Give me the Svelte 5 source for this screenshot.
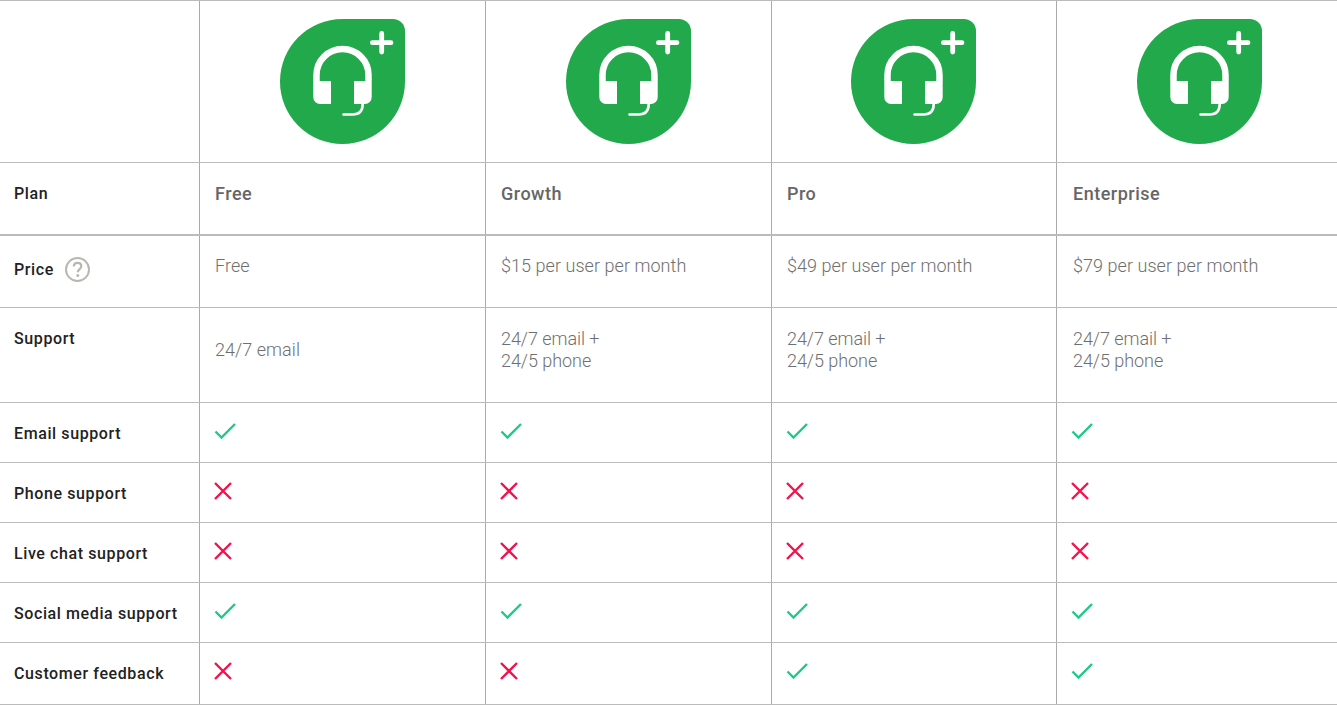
<script>
  const plans = ["Free", "Growth", "Pro", "Enterprise"];
  const prices = ["Free", "$15 per user per month", "$49 per user per month", "$79 per user per month"];
  const support = [["24/7 email"], ["24/7 email +", "24/5 phone"], ["24/7 email +", "24/5 phone"], ["24/7 email +", "24/5 phone"]];
  const features = [
    { name: "Email support", values: [true, true, true, true] },
    { name: "Phone support", values: [false, false, false, false] },
    { name: "Live chat support", values: [false, false, false, false] },
    { name: "Social media support", values: [true, true, true, true] },
    { name: "Customer feedback", values: [false, false, true, true] },
  ];
</script>

<div class="table">
  <div class="row logos">
    <div class="cell label"></div>
    {#each plans as plan}
      <div class="cell logo">
        <svg width="125" height="125" viewBox="0 0 125 125" aria-label={plan}>
          <path d="M62.5 0H113a12 12 0 0 1 12 12V62.5A62.5 62.5 0 1 1 62.5 0z" fill="#22a94b" />
          <path d="M36.5 62V56a26 26 0 0 1 52 0v6" fill="none" stroke="#fff" stroke-width="6.5" />
          <path d="M33.3 62H51V85H40a6.7 6.7 0 0 1-6.7-6.7zM74 62H91.7V78.3A6.7 6.7 0 0 1 85 85H74z" fill="#fff" />
          <path d="M82.7 85c0 7-3.5 10.5-10 10.5H63.5" fill="none" stroke="#fff" stroke-width="2.6" stroke-linecap="round" />
          <path d="M92.4 23.7h18.6M101.7 14.4v18.6" fill="none" stroke="#fff" stroke-width="4.8" stroke-linecap="round" />
        </svg>
      </div>
    {/each}
  </div>

  <div class="row plan">
    <div class="cell label">Plan</div>
    {#each plans as plan}
      <div class="cell name">{plan}</div>
    {/each}
  </div>

  <div class="row price">
    <div class="cell label">
      Price
      <svg class="help" width="25" height="25" viewBox="0 0 25 25">
        <circle cx="12.5" cy="12.5" r="11.5" fill="none" stroke="#b8b8b0" stroke-width="2" />
        <path d="M8.8 9.6c0-2.3 1.6-3.7 3.8-3.7s3.7 1.3 3.7 3.3c0 2.8-3.5 3-3.5 6" fill="none" stroke="#b8b8b0" stroke-width="2.2" />
        <circle cx="12.8" cy="18.6" r="1.5" fill="#b8b8b0" />
      </svg>
    </div>
    {#each prices as price}
      <div class="cell text">{price}</div>
    {/each}
  </div>

  <div class="row support">
    <div class="cell label">Support</div>
    {#each support as lines}
      <div class="cell text" class:single={lines.length === 1}>
        {#each lines as line}
          <div>{line}</div>
        {/each}
      </div>
    {/each}
  </div>

  {#each features as feature}
    <div class="row feature">
      <div class="cell label">{feature.name}</div>
      {#each feature.values as on}
        <div class="cell mark">
          {#if on}
            <svg width="24" height="18" viewBox="0 0 24 18">
              <path d="M1.5 9.5l6 6L21 2" fill="none" stroke="#1fc98a" stroke-width="2.4" />
            </svg>
          {:else}
            <svg width="18" height="18" viewBox="0 0 18 18">
              <path d="M1 1l16 16M17 1L1 17" fill="none" stroke="#f5114b" stroke-width="2.4" />
            </svg>
          {/if}
        </div>
      {/each}
    </div>
  {/each}
</div>

<style>
  :global(body) {
    margin: 0;
    background: #fff;
  }

  .table {
    width: 1337px;
    border-top: 1px solid #bbb;
    font-family: Roboto, "Liberation Sans", sans-serif;
    color: #222;
  }
  .row {
    display: grid;
    grid-template-columns: 199px 286px 286px 285px 281px;
    border-bottom: 1px solid #bbb;
    box-sizing: border-box;
  }
  .logos {
    height: 162px;
  }
  .plan {
    height: 73px;
    border-bottom-width: 2px;
  }
  .price {
    height: 72px;
  }
  .support {
    height: 95px;
  }
  .feature {
    height: 60px;
  }
  .feature:last-child {
    height: 62px;
  }

  .cell {
    box-sizing: border-box;
    padding: 21px 10px 0 15px;
    border-left: 1px solid #aaa;
  }
  .cell.label {
    border-left: 0;
    padding-left: 14px;
    font-size: 16px;
    font-weight: 500;
    line-height: 20px;
    letter-spacing: 0.6px;
  }
  .logo {
    padding: 18px 0 0 80px;
  }
  .logo:nth-child(4) {
    padding-left: 79px;
  }
  .logo svg {
    display: block;
  }
  .name {
    font-size: 18px;
    font-weight: 500;
    line-height: 20px;
    color: #666;
    letter-spacing: 0.5px;
  }
  .text {
    font-size: 18px;
    font-weight: 300;
    line-height: 23px;
    color: #6f6f6f;
    letter-spacing: 0.05px;
  }
  .name:last-child,
  .text:last-child {
    padding-left: 16px;
  }
  .price .cell.label {
    display: flex;
    align-items: flex-start;
    gap: 11px;
    padding-top: 24px;
  }
  .help {
    margin-top: -3px;
  }
  .price .text {
    padding-top: 18px;
  }
  .support .text {
    padding-top: 20px;
    line-height: 22px;
    letter-spacing: -0.05px;
  }
  .support .text.single {
    padding-top: 31px;
    letter-spacing: 0.05px;
  }
  .mark {
    padding: 19px 0 0 14px;
  }
  .mark svg {
    display: block;
  }
</style>
